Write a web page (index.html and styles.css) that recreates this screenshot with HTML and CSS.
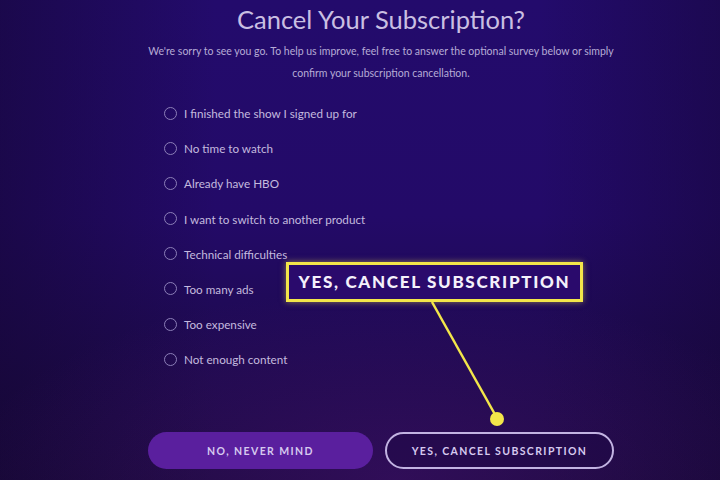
FILE: index.html
```html
<!DOCTYPE html>
<html lang="en">
<head>
  <meta charset="UTF-8" />
  <meta name="viewport" content="width=device-width, initial-scale=1.0" />
  <title>Cancel Your Subscription?</title>
  <link rel="stylesheet" href="styles.css">
</head>
<body>

  <main class="cancel-page">
    <h1>Cancel Your Subscription?</h1>
    <p class="intro">We're sorry to see you go. To help us improve, feel free to answer the optional survey below or simply confirm your subscription cancellation.</p>

    <form class="survey">
      <label class="option"><input type="radio" name="reason"><span>I finished the show I signed up for</span></label>
      <label class="option"><input type="radio" name="reason"><span>No time to watch</span></label>
      <label class="option"><input type="radio" name="reason"><span>Already have HBO</span></label>
      <label class="option"><input type="radio" name="reason"><span>I want to switch to another product</span></label>
      <label class="option"><input type="radio" name="reason"><span>Technical difficulties</span></label>
      <label class="option"><input type="radio" name="reason"><span>Too many ads</span></label>
      <label class="option"><input type="radio" name="reason"><span>Too expensive</span></label>
      <label class="option"><input type="radio" name="reason"><span>Not enough content</span></label>
    </form>

    <div class="actions">
      <button class="btn btn-keep">No, never mind</button>
      <button class="btn btn-cancel">Yes, cancel subscription</button>
    </div>
  </main>

  <!-- callout pointing at the cancel button -->
  <div class="callout">Yes, cancel subscription</div>
  <svg class="callout-line" width="720" height="480" viewBox="0 0 720 480">
    <line x1="432" y1="302" x2="497" y2="418" stroke="#f3e64a" stroke-width="2.5" />
    <circle cx="497" cy="419" r="7" fill="#f3e64a" />
  </svg>

</body>
</html>
```

FILE: styles.css
```css
html, body {
  height: 100%;
}

body {
  margin: 0;
  font-family: 'Lato', 'Noto Sans', sans-serif;
  color: #cdc4e6;
  background:
    radial-gradient(ellipse 60% 40% at 55% 100%, rgba(90, 20, 140, 0.35), transparent),
    linear-gradient(90deg, rgba(20, 6, 50, 0.55) 0%, transparent 30%, transparent 75%, rgba(20, 6, 50, 0.45) 100%),
    linear-gradient(180deg, #230b6c 0%, #230a68 45%, #1d0a4a 80%, #1a0a3c 100%);
  overflow: hidden;
  position: relative;
}

.cancel-page {
  width: 466px;
  margin-left: 148px;
  padding-top: 4px;
}

.cancel-page h1 {
  margin: 0;
  text-align: center;
  font-weight: 400;
  font-size: 25.5px;
  letter-spacing: 0;
  color: #c9bfe2;
}

.intro {
  margin: 6px 0 0;
  text-align: center;
  font-size: 10.5px;
  line-height: 22px;
  color: #b6abd6;
}

.survey {
  margin-top: 20px;
  padding-left: 16px;
  display: flex;
  flex-direction: column;
  gap: 17.2px;
}

.option {
  display: flex;
  align-items: center;
  gap: 7px;
  height: 18px;
  font-size: 11.7px;
  color: #c4badf;
}

.option input {
  appearance: none;
  margin: 0;
  width: 13px;
  height: 13px;
  border: 1.5px solid #8c7fb8;
  border-radius: 50%;
  background: transparent;
}

.actions {
  margin-top: 64px;
  display: flex;
  gap: 12px;
}

.btn {
  flex: 1;
  height: 37px;
  border-radius: 19px;
  font-family: 'Lato', sans-serif;
  font-weight: 700;
  font-size: 10.5px;
  letter-spacing: 1.4px;
  text-transform: uppercase;
  color: #d6c9ef;
  cursor: pointer;
}

.btn-keep {
  background: #5a1f9e;
  border: none;
}

.btn-cancel {
  background: rgba(30, 8, 70, 0.5);
  border: 2px solid #c2b3e2;
}

.callout {
  position: absolute;
  left: 286px;
  top: 262px;
  width: 291px;
  height: 34px;
  line-height: 34px;
  text-align: center;
  background: #2a0a6c;
  border: 3px solid #f3e64a;
  box-shadow: 0 0 6px rgba(243, 230, 74, 0.5);
  font-family: 'Lato', sans-serif;
  font-weight: 900;
  font-size: 17px;
  letter-spacing: 1.7px;
  text-transform: uppercase;
  color: #f4f0fb;
}

.callout-line {
  position: absolute;
  left: 0;
  top: 0;
  pointer-events: none;
}
```
